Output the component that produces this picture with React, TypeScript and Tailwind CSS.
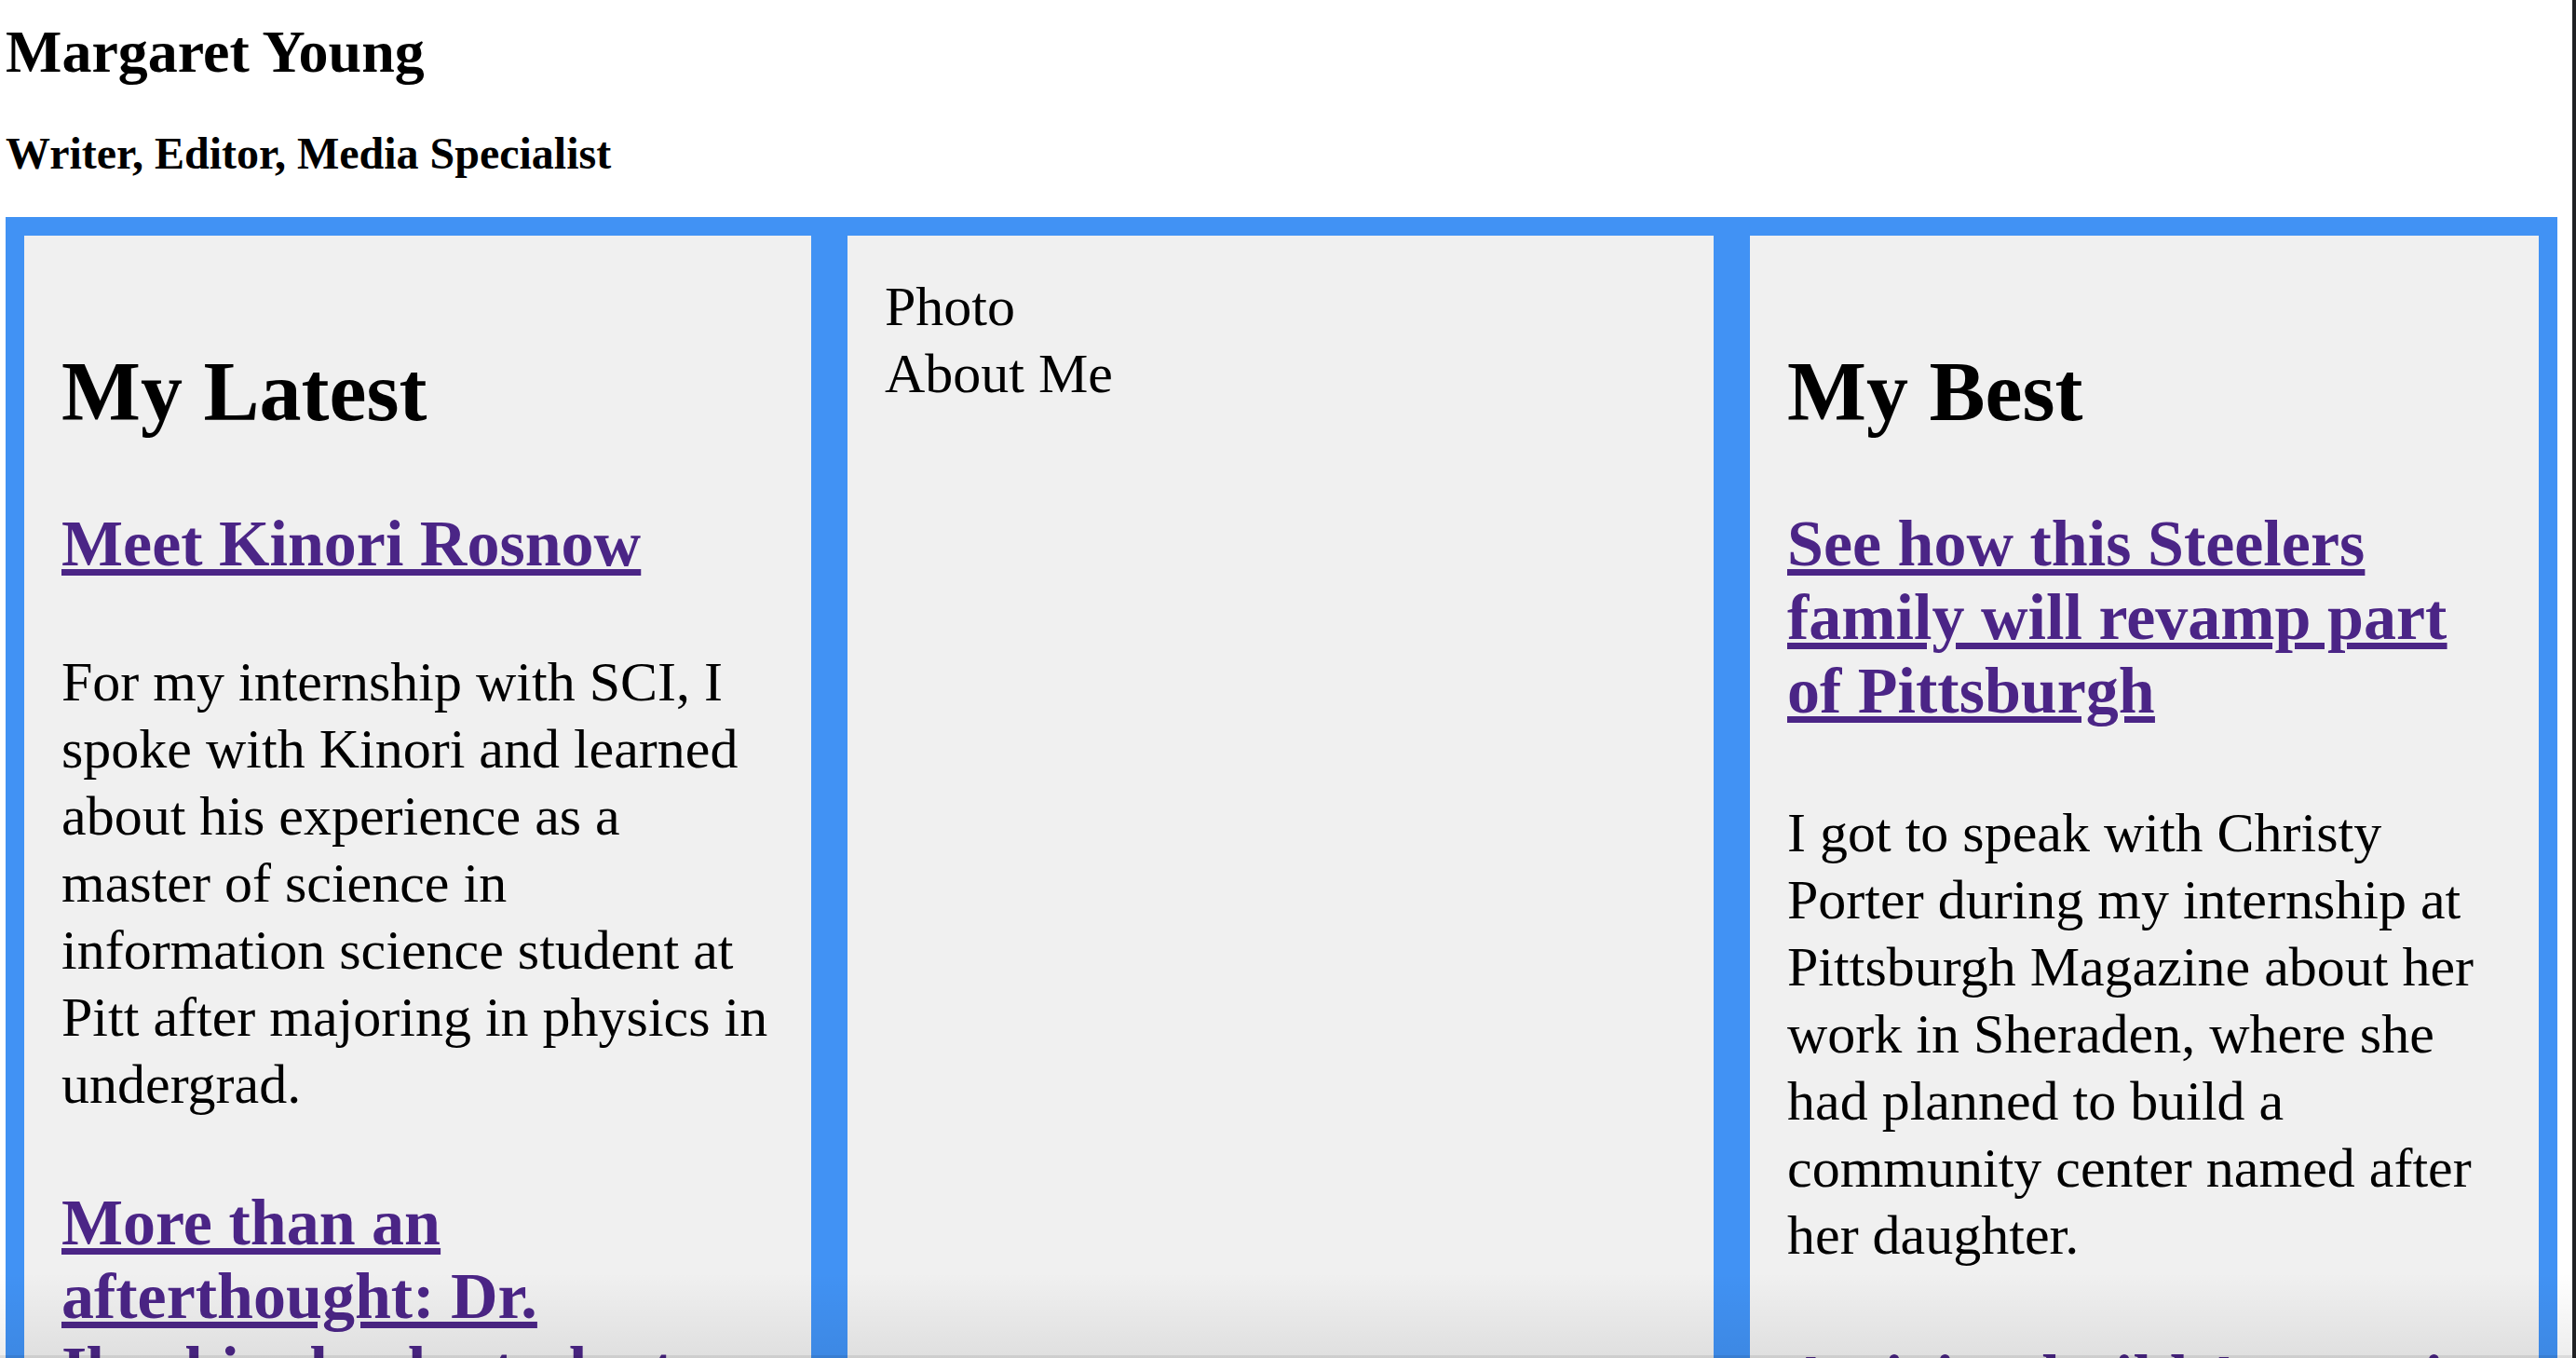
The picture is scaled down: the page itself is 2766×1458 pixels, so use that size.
export default function App() {
  return (
    <div className="relative flex h-[1458px] w-full overflow-hidden bg-white font-['Liberation_Serif',serif] text-black">
      <div className="flex-1 min-w-0 pl-[6px] pr-[16px]">
        <header className="pt-[20px]">
          <h1 className="text-[64px] leading-[72px] font-bold">Margaret Young</h1>
          <h2 className="text-[48px] leading-[54px] font-bold mt-[46px]">Writer, Editor, Media Specialist</h2>
        </header>

        <main className="mt-[41px] grid grid-cols-[845fr_930fr_847fr] gap-[39px] bg-[#4192f4] p-[20px]">
          <section className="bg-[#f0f0f0] px-[40px] pt-[40px] pb-[40px]">
            <h2 className="text-[90px] leading-[103px] font-bold mt-[76px]">My Latest</h2>
            <h3 className="text-[70px] leading-[79px] font-bold text-[#4b2586] underline mt-[72px]">
              <a href="#">Meet Kinori Rosnow</a>
            </h3>
            <p className="text-[60px] leading-[72px] mt-[73px]">
              For my internship with SCI, I spoke with Kinori and learned about his experience as a master of
              science in information science student at Pitt after majoring in physics in undergrad.
            </p>
            <h3 className="text-[70px] leading-[79px] font-bold text-[#4b2586] underline mt-[73px]">
              <a href="#">More than an afterthought: Dr. Ibrahim leads student efforts</a>
            </h3>
            <p className="text-[60px] leading-[72px] mt-[73px]">
              A profile of a faculty member and the students who work alongside him.
            </p>
          </section>

          <section className="bg-[#f0f0f0] px-[40px] pt-[40px] pb-[40px] text-[60px] leading-[72px]">
            <div>Photo</div>
            <div>About Me</div>
          </section>

          <section className="bg-[#f0f0f0] px-[40px] pt-[40px] pb-[40px]">
            <h2 className="text-[90px] leading-[103px] font-bold mt-[76px]">My Best</h2>
            <h3 className="text-[70px] leading-[79px] font-bold text-[#4b2586] underline mt-[72px]">
              <a href="#">See how this Steelers family will revamp part of Pittsburgh</a>
            </h3>
            <p className="text-[60px] leading-[72px] mt-[77px]">
              I got to speak with Christy Porter during my internship at Pittsburgh Magazine about her work in
              Sheraden, where she had planned to build a community center named after her daughter.
            </p>
            <h3 className="text-[70px] leading-[79px] font-bold text-[#4b2586] underline mt-[78px]">
              <a href="#">Activists build Anacostia gardens</a>
            </h3>
          </section>
        </main>
      </div>
      <div className="w-[4px] shrink-0 bg-[#202124]" />
      <div className="pointer-events-none absolute bottom-0 left-0 right-[4px] h-[92px] bg-gradient-to-b from-transparent to-black/[0.07]" />
      <div className="pointer-events-none absolute bottom-0 left-0 right-[4px] h-[3px] bg-black/[0.08]" />
    </div>
  );
}
